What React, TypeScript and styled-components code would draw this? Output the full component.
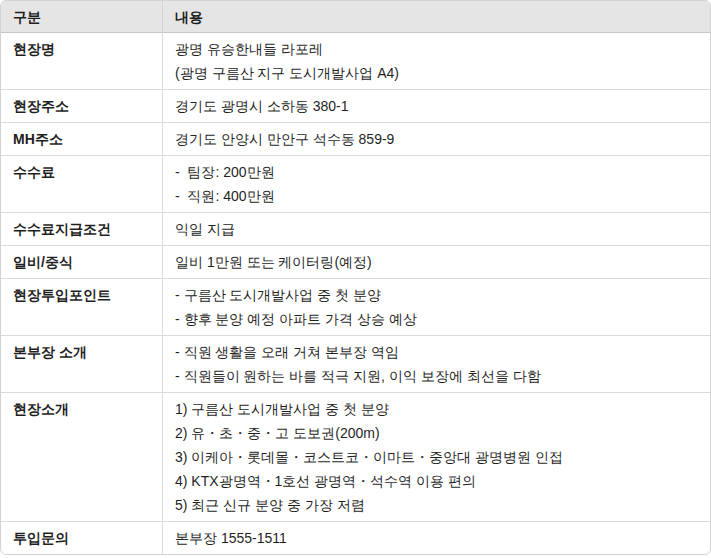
import React from "react";
import styled, { createGlobalStyle } from "styled-components";

const GlobalStyle = createGlobalStyle`
  body {
    margin: 0;
    background: #ffffff;
    font-family: sans-serif;
    color: #1f1f1f;
  }
`;

const Table = styled.table`
  width: 711px;
  border-collapse: separate;
  border-spacing: 0;
  border: 1px solid #d3d3d3;
  border-radius: 6px;
  overflow: hidden;
  font-size: 14px;
  line-height: 24px;
`;

const HeadCell = styled.th`
  background: #e5e5e5;
  text-align: left;
  font-weight: 700;
  padding: 4px 12px 3px;
  border-bottom: 1px solid #c6c6c6;

  &:first-child {
    width: 137px;
    border-right: 1px solid #d3d3d3;
  }
`;

const Row = styled.tr`
  &:last-child td {
    border-bottom: none;
  }
`;

const LabelCell = styled.td`
  vertical-align: top;
  font-weight: 700;
  padding: 4px 12px;
  border-bottom: 1px solid #dadada;
  border-right: 1px solid #dadada;
`;

const ValueCell = styled.td`
  vertical-align: top;
  padding: 4px 12px;
  border-bottom: 1px solid #dadada;
`;

const Line = styled.div`
  white-space: pre;
`;

const rows: { label: string; lines: string[] }[] = [
  { label: "현장명", lines: ["광명 유승한내들 라포레", "(광명 구름산 지구 도시개발사업 A4)"] },
  { label: "현장주소", lines: ["경기도 광명시 소하동 380-1"] },
  { label: "MH주소", lines: ["경기도 안양시 만안구 석수동 859-9"] },
  { label: "수수료", lines: ["-  팀장: 200만원", "-  직원: 400만원"] },
  { label: "수수료지급조건", lines: ["익일 지급"] },
  { label: "일비/중식", lines: ["일비 1만원 또는 케이터링(예정)"] },
  {
    label: "현장투입포인트",
    lines: ["- 구름산 도시개발사업 중 첫 분양", "- 향후 분양 예정 아파트 가격 상승 예상"],
  },
  {
    label: "본부장 소개",
    lines: [
      "- 직원 생활을 오래 거쳐 본부장 역임",
      "- 직원들이 원하는 바를 적극 지원, 이익 보장에 최선을 다함",
    ],
  },
  {
    label: "현장소개",
    lines: [
      "1) 구름산 도시개발사업 중 첫 분양",
      "2) 유・초・중・고 도보권(200m)",
      "3) 이케아・롯데몰・코스트코・이마트・중앙대 광명병원 인접",
      "4) KTX광명역・1호선 광명역・석수역 이용 편의",
      "5) 최근 신규 분양 중 가장 저렴",
    ],
  },
  { label: "투입문의", lines: ["본부장 1555-1511"] },
];

export default function App() {
  return (
    <>
      <GlobalStyle />
      <Table>
        <thead>
          <tr>
            <HeadCell>구분</HeadCell>
            <HeadCell>내용</HeadCell>
          </tr>
        </thead>
        <tbody>
          {rows.map((r) => (
            <Row key={r.label}>
              <LabelCell>{r.label}</LabelCell>
              <ValueCell>
                {r.lines.map((l) => (
                  <Line key={l}>{l}</Line>
                ))}
              </ValueCell>
            </Row>
          ))}
        </tbody>
      </Table>
    </>
  );
}
